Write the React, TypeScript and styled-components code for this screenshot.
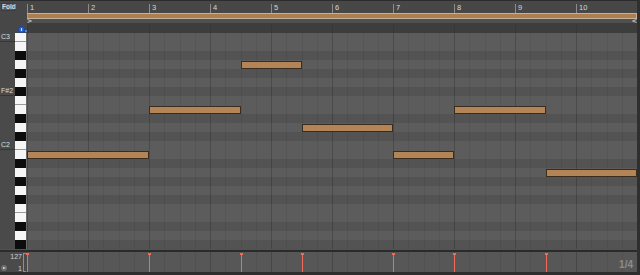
import React from "react";
import styled, { createGlobalStyle } from "styled-components";

////////////////////////////////////////////////////////////////////////////////
// Data
////////////////////////////////////////////////////////////////////////////////
const BAR = 61;
const BEAT = BAR / 4;
const ROW = 9;
const BARS = 10;

const NAMES = ["C", "C#", "D", "D#", "E", "F", "F#", "G", "G#", "A", "A#", "B"];
const LABELS = ["C3", "F#2", "C2"];

type Key = { name: string; black: boolean; split: boolean };

function genKeys(): Key[] {
  const keys: Key[] = [];
  for (let i = 0; i < 24; i++) {
    const pitch = 60 - i;
    const n = NAMES[pitch % 12];
    const octave = Math.floor(pitch / 12) - 2;
    keys.push({
      name: `${n}${octave}`,
      black: n.includes("#"),
      split: n === "C" || n === "F",
    });
  }
  return keys;
}

const KEYS = genKeys();

type Note = { start: number; len: number; row: number };

// start / len in beats, row counted from top (C3)
const NOTES: Note[] = [
  { start: 0, len: 8, row: 13 },
  { start: 8, len: 6, row: 8 },
  { start: 14, len: 4, row: 3 },
  { start: 18, len: 6, row: 10 },
  { start: 24, len: 4, row: 13 },
  { start: 28, len: 6, row: 8 },
  { start: 34, len: 6, row: 15 },
];

function beatX(beat: number): number {
  return Math.round(beat * BEAT);
}

////////////////////////////////////////////////////////////////////////////////
// Styles
////////////////////////////////////////////////////////////////////////////////
const GlobalStyle = createGlobalStyle`
  html, body {
    margin: 0;
    padding: 0;
    background: #2e2e2e;
  }
  body {
    font-family: "Liberation Sans", Arial, sans-serif;
  }
`;

const Editor = styled.div`
  width: 640px;
  height: 275px;
  box-sizing: border-box;
  padding-right: 3px;
  display: flex;
  flex-direction: column;
  background: #2f2f2f;
  overflow: hidden;
`;

const Band = styled.div<{ $h: number }>`
  display: flex;
  height: ${(p) => p.$h}px;
  flex: none;
`;

const Gutter = styled.div<{ $bg?: string }>`
  width: 27px;
  flex: none;
  background: ${(p) => p.$bg ?? "#474747"};
  position: relative;
`;

const Lane = styled.div<{ $bg: string }>`
  flex: 1;
  position: relative;
  background: ${(p) => p.$bg};
`;

const barLines = `
  repeating-linear-gradient(to right, rgba(0,0,0,0.13) 0 1px, transparent 1px ${BAR}px),
  repeating-linear-gradient(to right, rgba(0,0,0,0.07) 0 1px, transparent 1px ${BEAT}px)
`;

// ruler
const RulerBand = styled(Band)`
  border-top: 1px solid #2c2c2c;
  box-sizing: border-box;
`;

const FoldButton = styled.div`
  position: absolute;
  left: 1px;
  top: 2px;
  width: 14px;
  height: 8px;
  box-sizing: border-box;
  background: #5c5c5c;
  border: 1px solid #3c3c3c;
  color: #dadada;
  font-size: 6.5px;
  line-height: 6px;
  text-align: center;
  font-weight: bold;
`;

const Ruler = styled(Lane)`
  display: flex;
`;

const RulerBar = styled.div`
  width: ${BAR}px;
  flex: none;
  position: relative;
  color: #d6d6d6;
  font-size: 7.5px;
  line-height: 8px;
  padding: 3px 0 0 3px;
  box-sizing: border-box;
  &::before {
    content: "";
    position: absolute;
    left: 0;
    top: 3px;
    bottom: 0;
    width: 1px;
    background: #8c8c8c;
  }
`;

// loop brace
const LoopBar = styled.div`
  height: 6px;
  box-sizing: border-box;
  background: #ad7f4e;
  border: 1px solid #c4b39c;
  border-left-color: #a0a0a0;
`;

const MarkerLane = styled(Lane)`
  display: flex;
  justify-content: space-between;
  align-items: center;
`;

const DarkLane = styled(Lane)`
  background-image: repeating-linear-gradient(
    to right,
    rgba(0, 0, 0, 0.1) 0 1px,
    transparent 1px ${BAR}px
  );
`;

const BlueKnob = styled.div`
  position: absolute;
  left: 18px;
  top: 3px;
  width: 7px;
  height: 7px;
  border-radius: 50%;
  background: #2f66c6;
  box-shadow: inset 0 0 0 1px #1d4390;
  &::after {
    content: "";
    position: absolute;
    left: 3px;
    top: 2px;
    width: 1px;
    height: 3px;
    background: #cfe0ff;
  }
`;

const BlueDot = styled.div`
  position: absolute;
  right: 0;
  bottom: 1px;
  width: 2px;
  height: 2px;
  background: #4a86e0;
`;

// piano roll
const LabelColumn = styled.div`
  width: 15px;
  flex: none;
  display: flex;
  flex-direction: column;
  background: #4a4a4a;
`;

const LabelCell = styled.div<{ $marked: boolean }>`
  height: ${ROW}px;
  flex: none;
  box-sizing: border-box;
  border-bottom: 1px solid ${(p) => (p.$marked ? "#363636" : "transparent")};
  color: #dcdcdc;
  font-size: 7px;
  line-height: 8px;
  padding-left: 1px;
  white-space: nowrap;
`;

const Keyboard = styled.div`
  width: 12px;
  flex: none;
  display: flex;
  flex-direction: column;
  background: #6a6a6a;
  padding-right: 1px;
  box-sizing: border-box;
`;

const PianoKey = styled.div<{ $black: boolean; $split: boolean }>`
  height: ${ROW}px;
  flex: none;
  box-sizing: border-box;
  background: ${(p) => (p.$black ? "#0c0c0c" : "#f6f6f6")};
  border-bottom: 1px solid
    ${(p) => (p.$split ? "#9a9a9a" : p.$black ? "#0c0c0c" : "#f6f6f6")};
`;

const PianoGutter = styled(Gutter)`
  display: flex;
`;

const NoteGrid = styled(Lane)`
  display: flex;
  flex-direction: column;
`;

const GridRow = styled.div<{ $black: boolean }>`
  height: ${ROW}px;
  flex: none;
  background: ${(p) => (p.$black ? "#535353" : "#5c5c5c")};
`;

const GridLines = styled.div`
  position: absolute;
  inset: 0;
  background-image: ${barLines};
  pointer-events: none;
`;

const NoteBox = styled.div`
  position: absolute;
  height: ${ROW - 1}px;
  box-sizing: border-box;
  background: #b38556;
  border: 1px solid #3a2c1f;
`;

// velocity
const Separator = styled.div`
  height: 3px;
  flex: none;
  box-sizing: border-box;
  background: #525252;
  border-bottom: 2px solid #2b2b2b;
`;

const VelocityGutter = styled(Gutter)`
  display: flex;
  align-items: stretch;
  background: #4a4a4a;
`;

const PlayIcon = styled.div`
  align-self: flex-end;
  margin: 0 0 1px 1px;
  width: 6px;
  height: 6px;
  border-radius: 50%;
  background: #6e6e6e;
  position: relative;
  &::after {
    content: "";
    position: absolute;
    left: 2px;
    top: 1.5px;
    border-left: 3px solid #e4e4e4;
    border-top: 1.5px solid transparent;
    border-bottom: 1.5px solid transparent;
  }
`;

const Scale = styled.div`
  flex: 1;
  display: flex;
  flex-direction: column;
  justify-content: space-between;
  align-items: flex-end;
  color: #d0d0d0;
  font-size: 7px;
  line-height: 7px;
  padding: 1px 1px 0 0;
`;

const Bracket = styled.div`
  width: 2px;
  flex: none;
  margin: 1px 1px 0 0;
  border: 1px solid #8e8e8e;
  border-right: none;
`;

const VelocityLane = styled(Lane)`
  background-image: ${barLines};
`;

const Stem = styled.div`
  position: absolute;
  top: 1px;
  bottom: 0;
  width: 1px;
  background: #f26a5a;
  &::before {
    content: "";
    position: absolute;
    top: 0;
    left: -1px;
    width: 3px;
    height: 2px;
    background: #f26a5a;
  }
`;

const Division = styled.div`
  position: absolute;
  right: 4px;
  bottom: 2px;
  color: #8c8c8c;
  font-size: 10px;
  font-weight: bold;
  line-height: 10px;
`;

const BottomEdge = styled.div`
  height: 3px;
  flex: none;
  background: #2e2e2e;
`;

////////////////////////////////////////////////////////////////////////////////
// Parts
////////////////////////////////////////////////////////////////////////////////
const Marker: React.FC<{ flip?: boolean }> = ({ flip }) => (
  <svg width="5" height="4" viewBox="0 0 5 4" style={flip ? { transform: "scaleX(-1)" } : undefined}>
    <path d="M0.5 0.5 L4.5 2 L0.5 3.5" fill="none" stroke="#bdbdbd" strokeWidth="1" />
  </svg>
);

////////////////////////////////////////////////////////////////////////////////
// Export
////////////////////////////////////////////////////////////////////////////////
const App: React.FC = () => {
  const bars = Array.from({ length: BARS }, (_, i) => i + 1);
  return (
    <>
      <GlobalStyle />
      <Editor>
        <RulerBand $h={13}>
          <Gutter>
            <FoldButton>Fold</FoldButton>
          </Gutter>
          <Ruler $bg="#474747">
            {bars.map((b) => (
              <RulerBar key={b}>{b}</RulerBar>
            ))}
          </Ruler>
        </RulerBand>

        <Band $h={6}>
          <Gutter />
          <Lane $bg="#474747">
            <LoopBar />
          </Lane>
        </Band>

        <Band $h={4}>
          <Gutter />
          <MarkerLane $bg="#4f4f4f">
            <Marker />
            <Marker flip />
          </MarkerLane>
        </Band>

        <Band $h={10}>
          <Gutter>
            <BlueKnob />
            <BlueDot />
          </Gutter>
          <DarkLane $bg="#3d3d3d" />
        </Band>

        <Band $h={KEYS.length * ROW}>
          <PianoGutter>
            <LabelColumn>
              {KEYS.map((k) => {
                const marked = LABELS.includes(k.name);
                return (
                  <LabelCell key={k.name} $marked={marked}>
                    {marked ? k.name : ""}
                  </LabelCell>
                );
              })}
            </LabelColumn>
            <Keyboard>
              {KEYS.map((k) => (
                <PianoKey key={k.name} $black={k.black} $split={k.split} />
              ))}
            </Keyboard>
          </PianoGutter>
          <NoteGrid $bg="#5c5c5c">
            {KEYS.map((k) => (
              <GridRow key={k.name} $black={k.black} />
            ))}
            <GridLines />
            {NOTES.map((n) => (
              <NoteBox
                key={`${n.start}-${n.row}`}
                style={{
                  left: beatX(n.start),
                  top: n.row * ROW + 1,
                  width: beatX(n.start + n.len) - beatX(n.start),
                }}
              />
            ))}
          </NoteGrid>
        </Band>

        <Separator />

        <Band $h={20}>
          <VelocityGutter>
            <PlayIcon />
            <Scale>
              <span>127</span>
              <span>1</span>
            </Scale>
            <Bracket />
          </VelocityGutter>
          <VelocityLane $bg="#575757">
            {NOTES.map((n) => (
              <Stem key={`${n.start}-${n.row}`} style={{ left: beatX(n.start) }} />
            ))}
            <Division>1/4</Division>
          </VelocityLane>
        </Band>

        <BottomEdge />
      </Editor>
    </>
  );
};

export default App;
